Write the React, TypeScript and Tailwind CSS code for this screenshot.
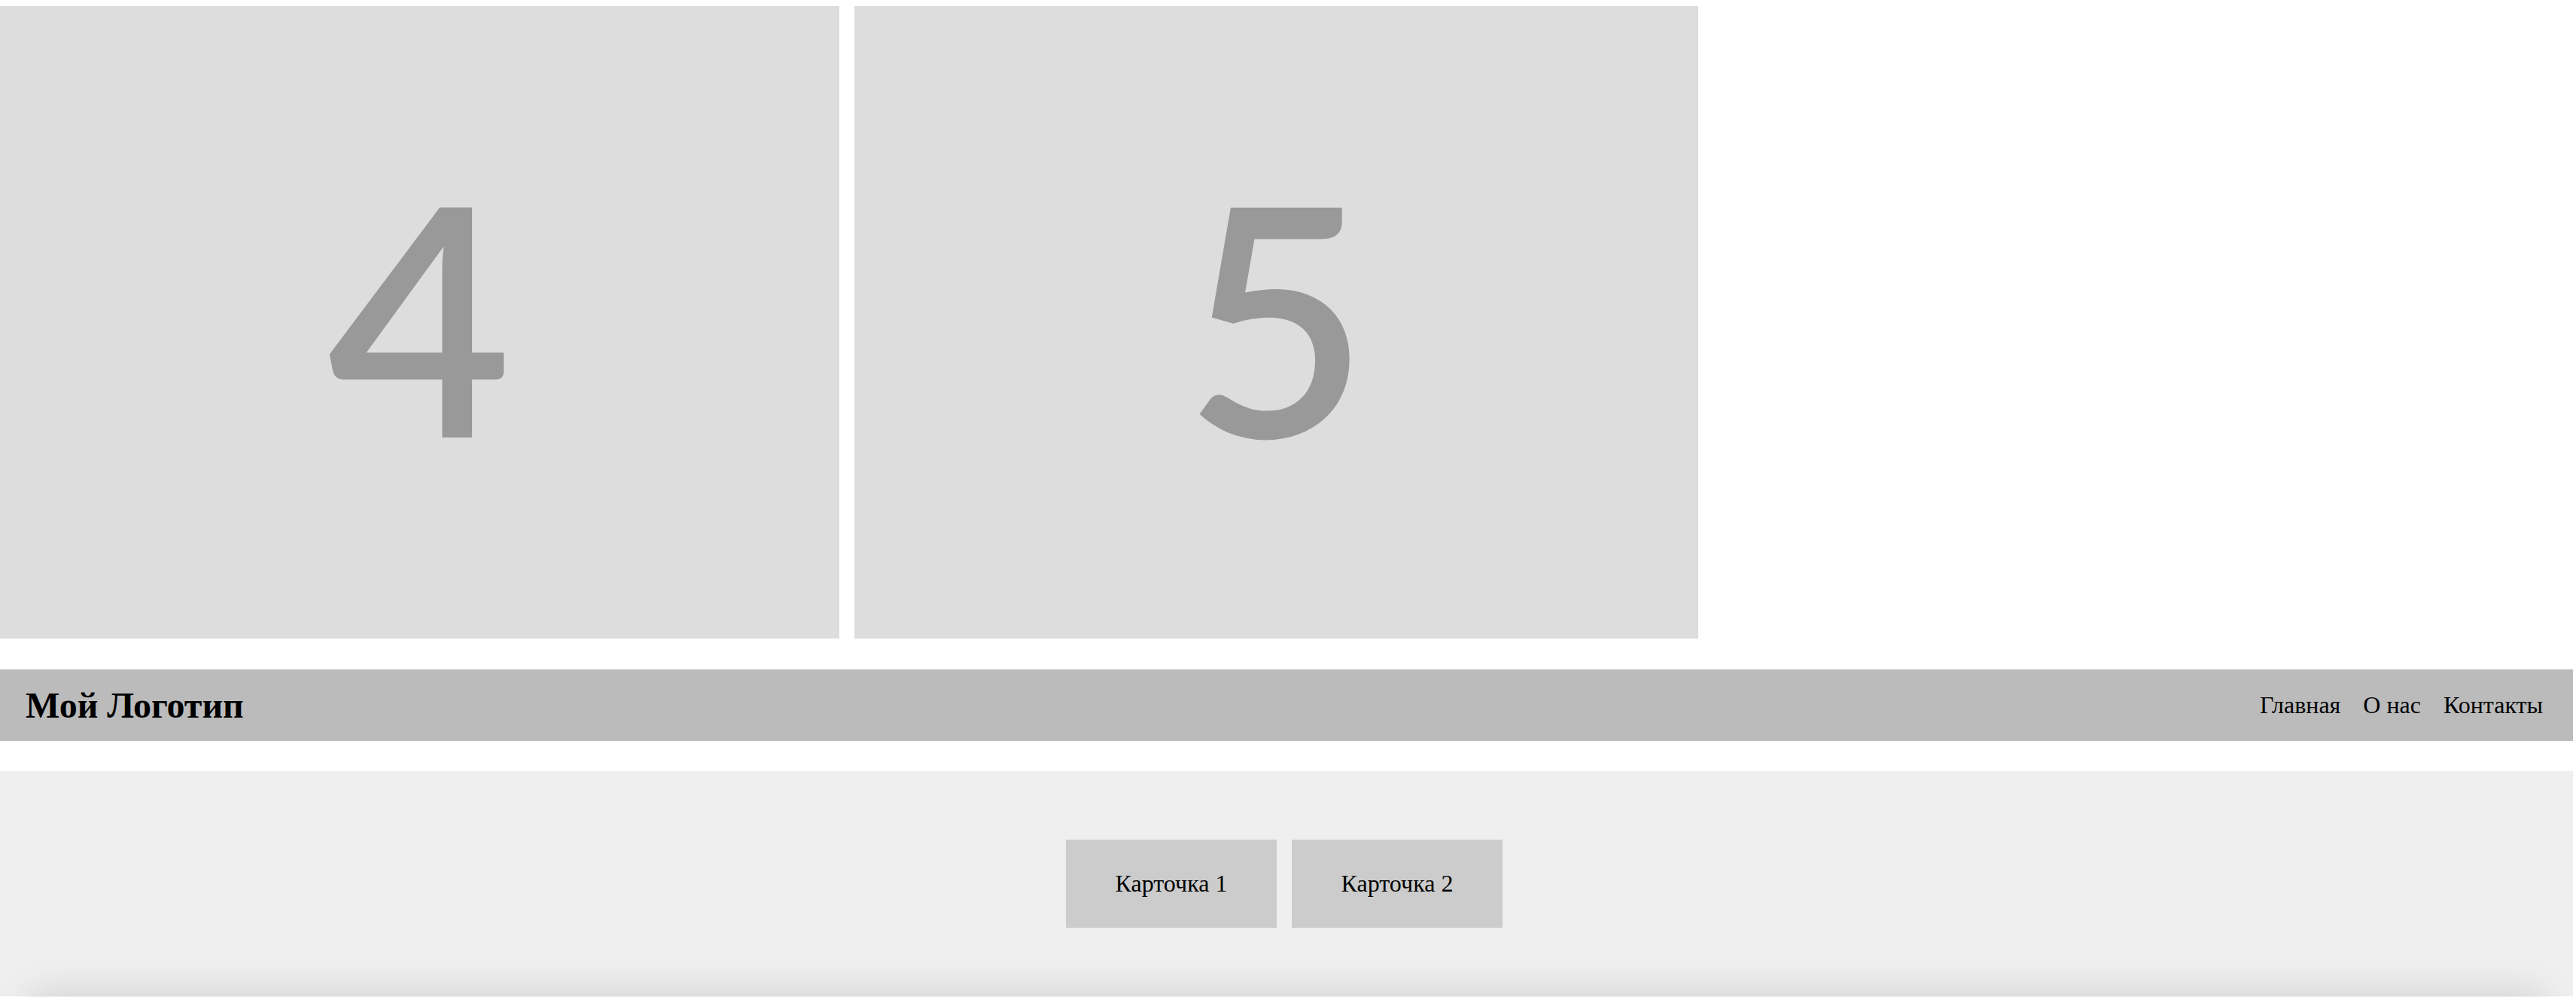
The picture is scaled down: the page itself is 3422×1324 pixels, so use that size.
export default function App() {
  return (
    <div className="min-h-screen overflow-hidden bg-white pr-[4px] pt-2 font-['Liberation_Serif',serif] text-black">
      {/* слайды */}
      <div className="flex gap-5">
        <div className="flex h-[840px] w-[1115px] shrink-0 items-center justify-center bg-[#dddddd]">
          <span className="mb-[22px] font-['Lato',sans-serif] text-[424px] font-semibold leading-none text-[#999999]">4</span>
        </div>
        <div className="flex h-[840px] w-[1121px] shrink-0 items-center justify-center bg-[#dddddd]">
          <span className="mb-[22px] font-['Lato',sans-serif] text-[424px] font-semibold leading-none text-[#999999]">5</span>
        </div>
      </div>

      <header className="mt-[41px] flex items-center justify-between bg-[#bbbbbb] py-5 pl-[34px] pr-10">
        <h1 className="text-[48px] font-bold leading-[normal]">Мой Логотип</h1>
        <nav className="flex gap-[30px] text-[32px] leading-[normal]">
          <a href="#">Главная</a>
          <a href="#">О нас</a>
          <a href="#">Контакты</a>
        </nav>
      </header>

      <section className="mt-10 flex justify-center gap-5 bg-[#efefef] pb-[91px] pt-[91px] pr-[6px]">
        <div className="w-[280px] bg-[#cccccc] py-10 text-center text-[32px] leading-[normal]">Карточка 1</div>
        <div className="w-[280px] bg-[#cccccc] py-10 text-center text-[32px] leading-[normal]">Карточка 2</div>
      </section>

      <footer className="mx-10 h-[200px] bg-[#efefef] shadow-[0_0_50px_rgba(0,0,0,0.15)]" />
    </div>
  )
}
